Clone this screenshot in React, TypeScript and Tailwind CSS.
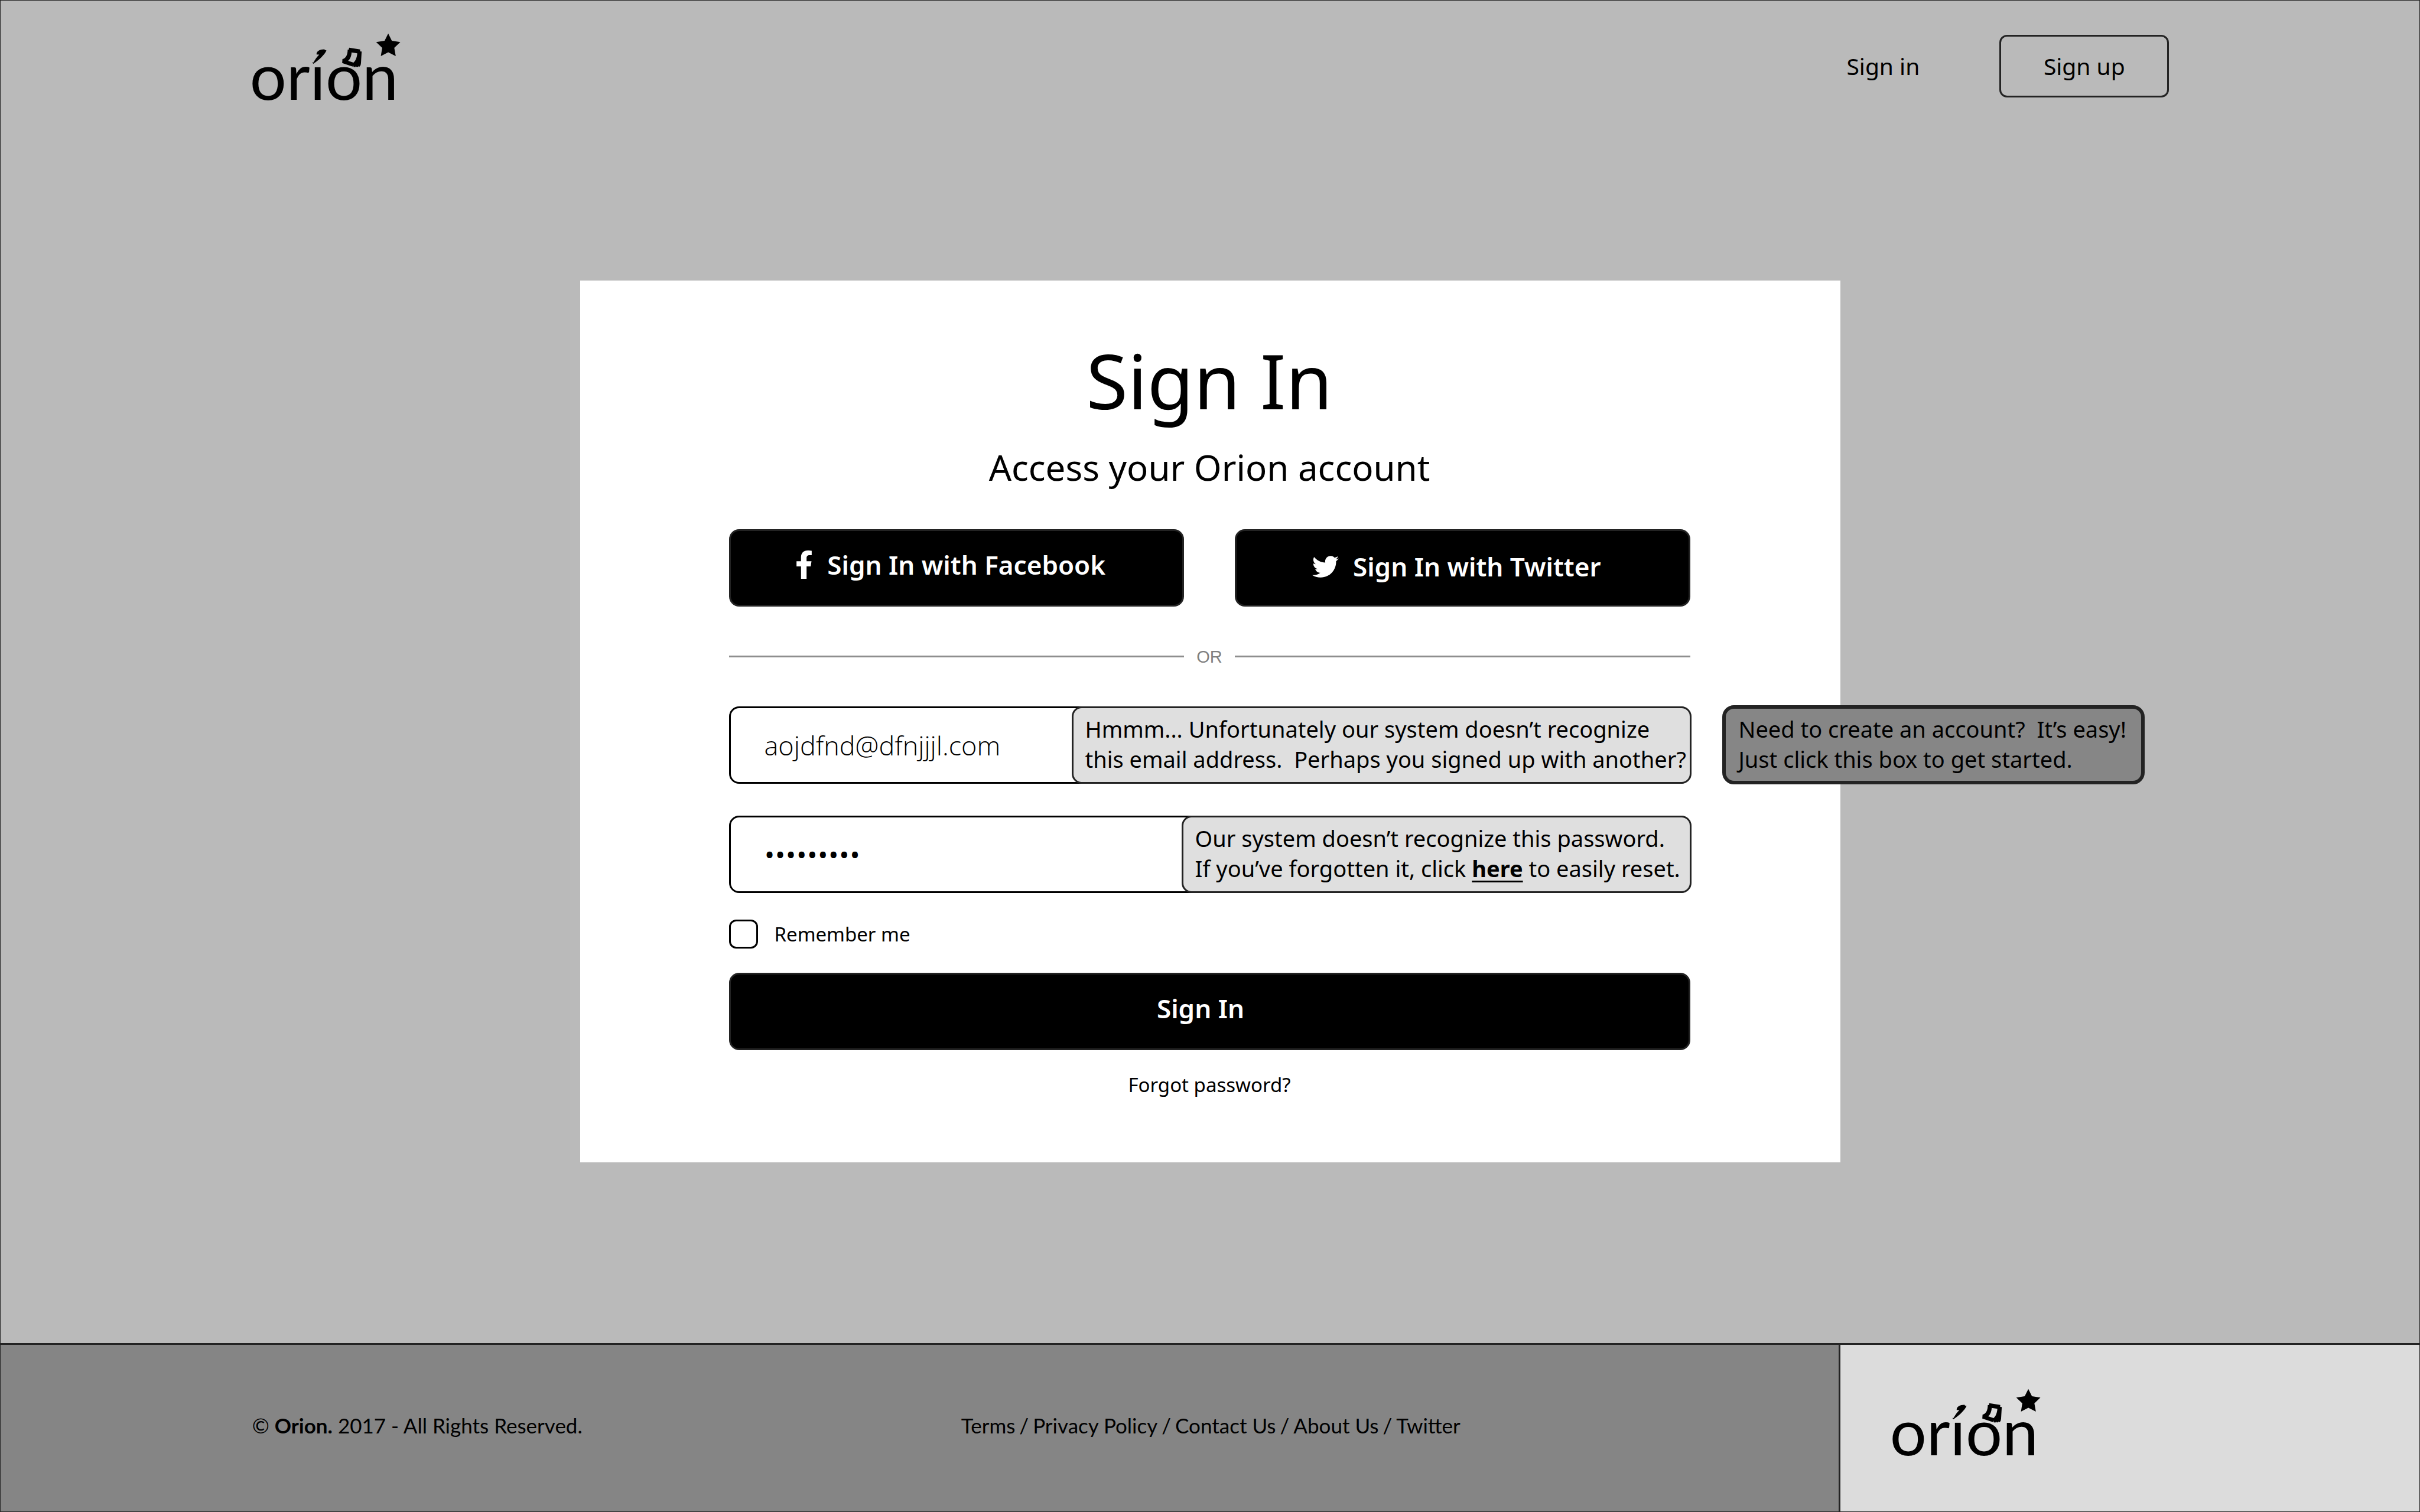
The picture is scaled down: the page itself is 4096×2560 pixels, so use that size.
import { FaFacebookF, FaTwitter } from "react-icons/fa";

const footerLinks = ["Terms", "Privacy Policy", "Contact Us", "About Us", "Twitter"];

function Logo() {
  return (
    <a href="#" aria-label="Orion home" className="block">
      <svg viewBox="195 115 1110 515" className="block h-[117px] w-[253px] overflow-visible" fill="#000">
        <text x="174" y="624" fontSize="482" className="font-['Lato',sans-serif]">
          orıon
        </text>
        <path d="M641 350L649 357L657 350C690 330 736 284 745 259L743 254L735 257L731 249C700 248 670 262 672 288L692 289C675 305 660 328 648 348L644 345Z" />
        <path
          fillRule="evenodd"
          d="M915 237L997 250L996 265L1008 266L1003 352Q1000 380 986 380L984 373L981 380L969 380L966 374L961 381L948 380L944 366L941 378L863 352L865 322C888 320 904 292 904 252L912 252ZM933 272C932 300 920 325 907 335L947 348C965 335 975 300 975 279Z"
        />
        <polygon points="1206,131 1233,185 1296,195 1251,238 1262,300 1206,271 1151,300 1161,238 1116,195 1179,185" />
      </svg>
    </a>
  );
}

function Header() {
  return (
    <header className="flex items-center justify-between pt-[52px] pr-[10.35%] pl-[10.4%]">
      <Logo />
      <nav className="flex items-center gap-[135px] text-[39px] leading-[50px]">
        <a href="#signin">Sign in</a>
        <button type="button" className="h-[106px] w-[287px] rounded-[13px] border-3 border-[#232323]">
          Sign up
        </button>
      </nav>
    </header>
  );
}

const solidButton =
  "flex h-[131px] items-center justify-center rounded-[17px] border-3 border-[#232323] bg-black text-[44px] font-semibold text-white";
const field = "h-[131px] w-full rounded-[17px] border-3 border-black bg-white px-[57px] outline-none";
const notice =
  "absolute top-0 -right-[2px] flex h-[131px] flex-col justify-center rounded-[17px] border-3 border-[#232323] bg-[#dfdfdf] pb-[2px] pl-[20px] text-[38px] leading-[51px] whitespace-nowrap";

function SignInCard() {
  return (
    <form className="w-full max-w-[2133px] bg-white pt-[101px] pr-[254px] pb-[107px] pl-[252px]">
      <h1 className="text-center text-[128px] leading-[136px]">Sign In</h1>
      <h2 className="mt-[39px] text-center text-[60px] leading-[80px]">Access your Orion account</h2>

      <div className="mt-[65px] grid grid-cols-2 gap-[86px]">
        <button type="button" className={`${solidButton} gap-[24px] pr-[20px] pb-[10px]`}>
          <FaFacebookF className="h-[48px] w-[30px]" aria-hidden="true" />
          Sign In with Facebook
        </button>
        <button type="button" className={`${solidButton} gap-[24px] pr-[20px] pb-[4px]`}>
          <FaTwitter className="h-[45px] w-[45px]" aria-hidden="true" />
          Sign In with Twitter
        </button>
      </div>

      <div className="mt-[69px] flex items-center">
        <hr className="flex-1 border-t-3 border-[#8e8e8e]" />
        <span className="w-[86px] text-center font-['Liberation_Sans',sans-serif] text-[29px] leading-[32px] text-[#808080]">
          OR
        </span>
        <hr className="flex-1 border-t-3 border-[#8e8e8e]" />
      </div>

      <div className="relative mt-[68px]">
        <input
          type="email"
          aria-label="Email address"
          defaultValue="aojdfnd@dfnjjjl.com"
          className={`${field} font-['Open_Sans',sans-serif] text-[45px] font-light`}
        />
        <p role="alert" className={`${notice} w-[1049px]`}>
          <span>Hmmm... Unfortunately our system doesn’t recognize</span>
          <span>this email address.&nbsp; Perhaps you signed up with another?</span>
        </p>
        <button
          type="button"
          className="absolute -top-[2px] left-full ml-[54px] h-[134px] w-[715px] rounded-[20px] border-6 border-[#232323] bg-[#868686] pb-[2px] pl-[22px] text-left text-[38px] leading-[51px] whitespace-nowrap"
        >
          Need to create an account?&nbsp; It’s easy!
          <br />
          Just click this box to get started.
        </button>
      </div>

      <div className="relative mt-[54px]">
        <input
          type="password"
          aria-label="Password"
          defaultValue="password1"
          className={`${field} font-['Open_Sans',sans-serif] text-[48px]`}
        />
        <p role="alert" className={`${notice} w-[863px]`}>
          <span>Our system doesn’t recognize this password.</span>
          <span>
            If you’ve forgotten it, click{" "}
            <a href="#reset" className="font-bold underline decoration-3 underline-offset-6">
              here
            </a>{" "}
            to easily reset.
          </span>
        </p>
      </div>

      <label className="mt-[45px] flex w-fit items-center gap-[28px] text-[33px] leading-[49px]">
        <input
          type="checkbox"
          className="h-[49px] w-[49px] appearance-none rounded-[12px] border-3 border-black bg-white checked:bg-black"
        />
        Remember me
      </label>

      <button type="submit" className={`${solidButton} mt-[41px] w-full pr-[30px] pb-[10px]`}>
        Sign In
      </button>

      <p className="mt-[35px] text-center text-[33px] leading-[48px]">
        <a href="#forgot">Forgot password?</a>
      </p>
    </form>
  );
}

function Footer() {
  return (
    <footer className="flex h-[285px] border-t-3 border-[#232323] font-['Lato',sans-serif] text-[35px] leading-[48px]">
      <div className="flex flex-1 items-center bg-[#858585] pb-[10px] pl-[10.4%]">
        <p className="w-[1200px]">
          © <strong>Orion.</strong> 2017 - All Rights Reserved.
        </p>
        <nav className="flex gap-[7px]">
          {footerLinks.map((name, i) => (
            <span key={name} className="flex gap-[7px]">
              {i > 0 && <span>/</span>}
              <a href="#footer">{name}</a>
            </span>
          ))}
        </nav>
      </div>
      <div className="w-[24%] border-l-3 border-[#232323] bg-[#dcdcdc] pt-[71px] pl-[88px]">
        <Logo />
      </div>
    </footer>
  );
}

export default function App() {
  return (
    <div className="flex min-h-screen flex-col border border-[#232323] bg-[#bababa] font-['Noto_Sans','Open_Sans',sans-serif] text-black">
      <Header />
      <main className="flex flex-1 items-center justify-center pb-[2px]">
        <SignInCard />
      </main>
      <Footer />
    </div>
  );
}
